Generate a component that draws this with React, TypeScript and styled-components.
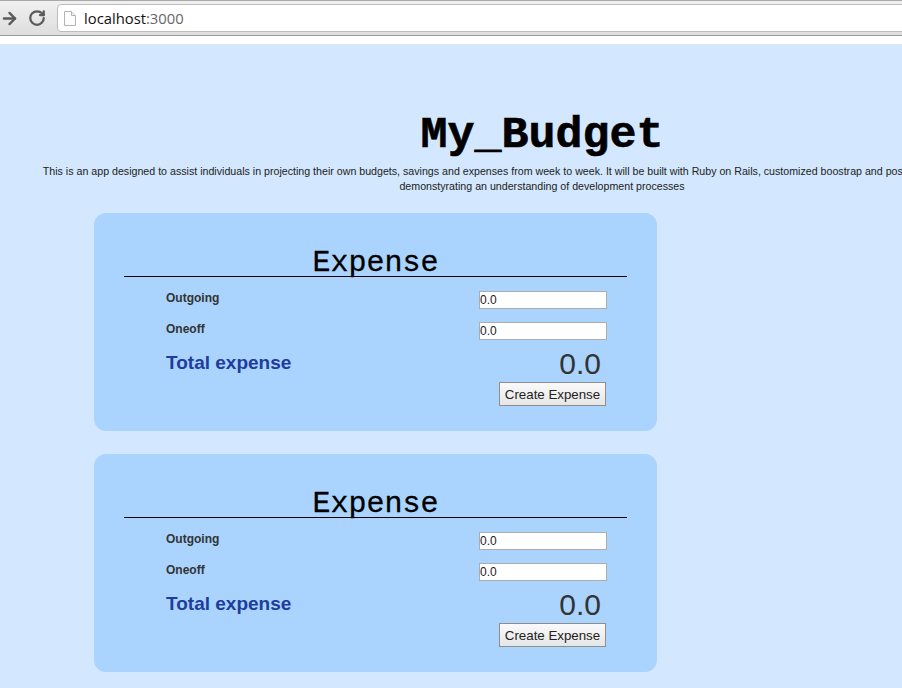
import React from "react";
import styled, { createGlobalStyle } from "styled-components";
import { ArrowRight, RotateCw } from "lucide-react";

const GlobalStyle = createGlobalStyle`
  html, body {
    margin: 0;
    padding: 0;
    width: 902px;
    height: 688px;
    overflow: hidden;
    background: #d3e8fe;
    font-family: "Liberation Sans", Arial, sans-serif;
  }
`;

const Toolbar = styled.div`
  display: flex;
  align-items: center;
  height: 34px;
  background: linear-gradient(#f0f0f0, #dedede);
  border-top: 1px solid #a8a8a8;
  border-bottom: 1px solid #9b9b9b;
`;

const NavButton = styled.span<{ $left: number }>`
  display: flex;
  width: 19px;
  margin-left: ${({ $left }) => $left}px;
  color: #5a5a5a;
`;

const AddressBar = styled.div`
  display: flex;
  align-items: center;
  flex: 1;
  height: 26px;
  margin-left: 10px;
  margin-right: -6px;
  padding-left: 5px;
  background: #fff;
  border: 1px solid #bdbdbd;
  border-radius: 4px;
  font-family: "Open Sans", "Liberation Sans", sans-serif;
  font-size: 14.8px;
`;

const Host = styled.span`
  color: #111;
  margin-left: 7px;
`;

const Port = styled.span`
  color: #666;
`;

const WhiteStrip = styled.div`
  height: 8px;
  background: #fff;
`;

const Page = styled.div`
  width: 1084px;
  padding-top: 69px;
`;

const Title = styled.h1`
  margin: 0;
  text-align: center;
  font-family: "Liberation Mono", "Courier New", monospace;
  font-size: 45px;
  line-height: 46px;
  font-weight: bold;
  color: #000;
  -webkit-text-stroke: 0.6px #000;
`;

const Intro = styled.p`
  margin: 5px 0 0;
  text-align: center;
  font-size: 10.65px;
  line-height: 15px;
  color: #222;
`;

const Cards = styled.div`
  display: flex;
  flex-direction: column;
  gap: 23px;
  width: 563px;
  margin: 19px 0 0 94px;
`;

const Card = styled.form`
  height: 218px;
  box-sizing: border-box;
  padding: 30px 30px 0;
  background: #aad4fe;
  border-radius: 12px;
`;

const CardTitle = styled.h2`
  margin: 0;
  height: 33px;
  border-bottom: 1px solid #000;
  text-align: center;
  font-family: "Liberation Mono", "Courier New", monospace;
  font-size: 30px;
  line-height: 40px;
  font-weight: normal;
  color: #000;
  -webkit-text-stroke: 0.3px #000;
`;

const Fields = styled.div`
  display: flex;
  flex-direction: column;
  margin: 14px 20px 0 42px;
`;

const Row = styled.div`
  display: flex;
  align-items: center;
  justify-content: space-between;
  height: 18px;
  margin-bottom: 13px;
`;

const Label = styled.label`
  font-size: 12px;
  font-weight: bold;
  color: #333;
  margin-top: -5px;
`;

const Input = styled.input`
  width: 128px;
  height: 18px;
  box-sizing: border-box;
  padding: 0;
  background: #fff;
  border: 1px solid #adadad;
  border-radius: 0;
  font-family: "Liberation Sans", Arial, sans-serif;
  font-size: 12px;
  color: #222;
`;

const TotalRow = styled.div`
  display: flex;
  align-items: center;
  justify-content: space-between;
  height: 30px;
  margin-top: -4px;
`;

const TotalLabel = styled.span`
  font-size: 19px;
  font-weight: bold;
  color: #203c9c;
  margin-top: -2px;
`;

const TotalValue = styled.span`
  font-size: 30px;
  color: #333;
  margin-right: 6px;
`;

const Actions = styled.div`
  display: flex;
  justify-content: flex-end;
  margin: 3px 1px 0 0;
`;

const Submit = styled.button`
  width: 107px;
  height: 24px;
  padding: 0;
  background: linear-gradient(#fafafa, #e6e6e6);
  border: 1px solid #8e8e8e;
  border-radius: 0;
  font-family: "Liberation Sans", Arial, sans-serif;
  font-size: 13.3px;
  color: #222;
`;

const PageIcon = () => (
  <svg width="14" height="17" viewBox="0 0 14 17">
    <path d="M1.5 1.5h7l4 4v10h-11z" fill="#fdfdfd" stroke="#b4b4b4" />
    <path d="M8.5 1.5v4h4" fill="#eee" stroke="#b4b4b4" />
  </svg>
);

const ExpenseCard: React.FC = () => (
  <Card>
    <CardTitle>Expense</CardTitle>
    <Fields>
      <Row>
        <Label>Outgoing</Label>
        <Input defaultValue="0.0" />
      </Row>
      <Row>
        <Label>Oneoff</Label>
        <Input defaultValue="0.0" />
      </Row>
      <TotalRow>
        <TotalLabel>Total expense</TotalLabel>
        <TotalValue>0.0</TotalValue>
      </TotalRow>
      <Actions>
        <Submit type="button">Create Expense</Submit>
      </Actions>
    </Fields>
  </Card>
);

export default function App() {
  return (
    <>
      <GlobalStyle />
      <Toolbar>
        <NavButton $left={0}>
          <ArrowRight size={19} strokeWidth={3} />
        </NavButton>
        <NavButton $left={9}>
          <RotateCw size={18} strokeWidth={3} />
        </NavButton>
        <AddressBar>
          <PageIcon />
          <Host>localhost</Host>
          <Port>:3000</Port>
        </AddressBar>
      </Toolbar>
      <WhiteStrip />
      <Page>
        <Title>My_Budget</Title>
        <Intro>
          This is an app designed to assist individuals in projecting their own budgets, savings
          and expenses from week to week. It will be built with Ruby on Rails, customized boostrap
          and possibly Javascript, all while also
          <br />
          demonstyrating an understanding of development processes
        </Intro>
        <Cards>
          <ExpenseCard />
          <ExpenseCard />
        </Cards>
      </Page>
    </>
  );
}
